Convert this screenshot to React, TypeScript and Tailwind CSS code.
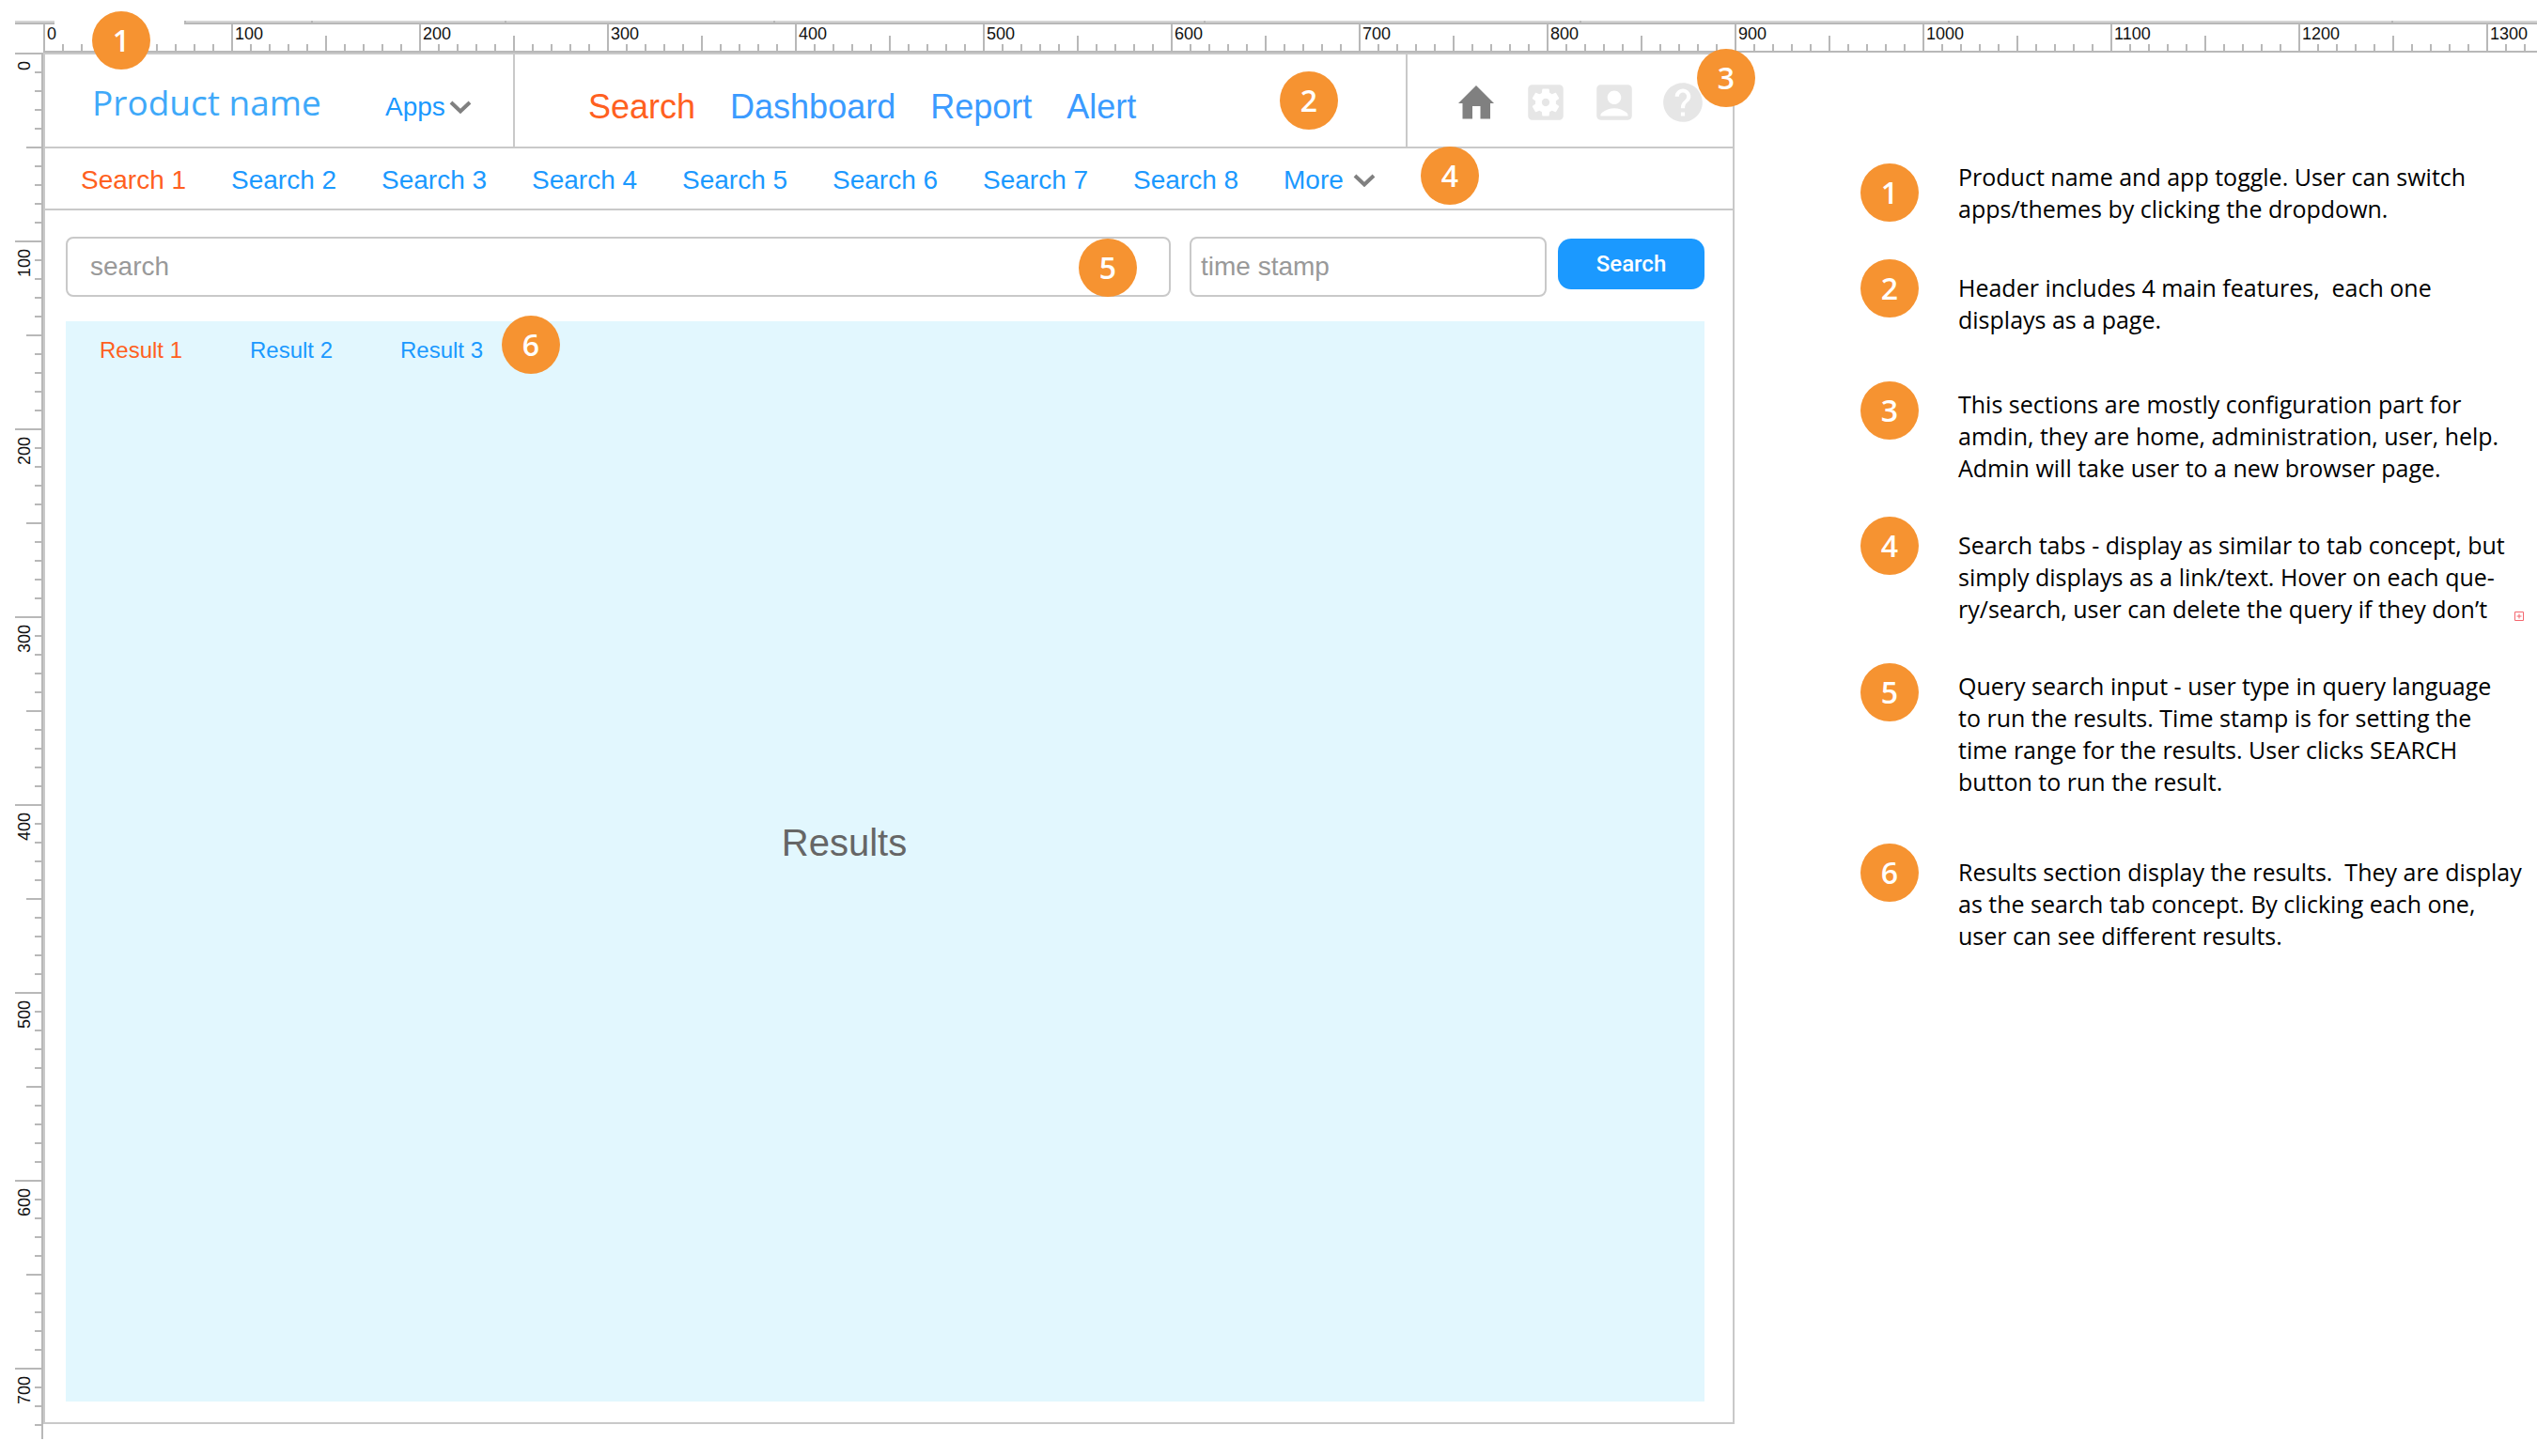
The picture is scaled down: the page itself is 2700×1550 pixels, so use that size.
import React from "react";
import { MdAccountBox, MdHelp, MdSettingsApplications } from "react-icons/md";

const TEN = [0, 1, 2, 3, 4, 5, 6, 7, 8, 9];

function Badge({ n, className = "" }: { n: number; className?: string }) {
  return (
    <span
      className={`flex h-[62px] w-[62px] shrink-0 items-center justify-center rounded-full bg-[#f69331] font-['Open_Sans','Noto_Sans',sans-serif] text-[32px] leading-[62px] font-semibold text-white ${className}`}
    >
      {n}
    </span>
  );
}

function Chevron() {
  return (
    <svg viewBox="0 0 24 14" className="h-[14px] w-6" fill="none" stroke="#808080" strokeWidth="4" aria-hidden="true">
      <path d="M2 2l10 9.500L22 2" />
    </svg>
  );
}

function HomeIcon() {
  return (
    <svg viewBox="0 0 38 36" className="h-9 w-[38px]" fill="#808080" aria-hidden="true">
      <path d="M19 0L38 19H34V35.500H23.500V22H15V35.500H4.500V19H0Z" />
    </svg>
  );
}

function HorizontalRuler() {
  const marks = [0, 100, 200, 300, 400, 500, 600, 700, 800, 900, 1000, 1100, 1200, 1300];
  const edge = "h-1 shrink-0 border-b-2 border-b-[#b8b8b8] bg-[#d4d4d4]";
  const notch = `${edge} border-l-2 border-l-[#b8b8b8]`;
  return (
    <div className="h-14 overflow-hidden pt-[22px]">
      <div className="flex pl-4">
        <div className={`${edge} mr-[138px] w-[42px]`} />
        <div className={`${notch} w-[135px]`} />
        <div className={`${notch} w-[206px]`} />
        <div className={`${notch} w-[286px]`} />
        <div className={`${notch} w-[458px]`} />
        <div className={`${notch} w-[400px]`} />
        <div className={`${notch} w-[392px]`} />
        <div className={`${notch} w-[472px]`} />
        <div className={`${notch} grow`} />
      </div>
      <div className="ml-[46px] flex h-[30px] overflow-hidden border-b-2 border-[#b8b8b8]">
        {marks.map((m) => (
          <div key={m} className="relative flex w-[200px] shrink-0 items-end">
            {TEN.map((t) => (
              <div
                key={t}
                className={`w-5 border-l-2 border-[#b8b8b8] ${t === 0 ? "h-full" : t === 5 ? "h-4" : "h-[7px]"}`}
              />
            ))}
            <span className="absolute top-0 left-1 text-[18px] leading-[20px] text-[#111]">{m}</span>
          </div>
        ))}
      </div>
    </div>
  );
}

function VerticalRuler() {
  const marks = [0, 100, 200, 300, 400, 500, 600, 700];
  return (
    <div className="w-[46px] shrink-0 border-r-2 border-[#b8b8b8]">
      {marks.map((m) => (
        <div key={m} className={`relative flex flex-col items-end overflow-hidden ${m === 700 ? "h-[76px]" : "h-[200px]"}`}>
          {TEN.map((t) => (
            <div
              key={t}
              className={`h-5 shrink-0 border-t-2 border-[#b8b8b8] ${t === 0 ? "w-7" : t === 5 ? "w-4" : "w-[7px]"}`}
            />
          ))}
          <span className="absolute top-[9px] left-4 rotate-180 text-[18px] leading-[20px] text-[#111] [writing-mode:vertical-rl]">
            {m}
          </span>
        </div>
      ))}
    </div>
  );
}

function Header() {
  return (
    <header className="flex h-[100px] border-b-2 border-[#c9c9c9]">
      <div className="relative flex w-[500px] shrink-0 items-center border-r-2 border-[#c9c9c9] pl-[50px]">
        <h1 className="w-[312px] pt-1 font-['Open_Sans','Noto_Sans',sans-serif] text-[37px] leading-[48px] text-[#3fa9f9]">
          Product name
        </h1>
        <button type="button" className="flex items-center gap-1 pt-[14px] text-[28px] leading-[36px] text-[#1b99ff]">
          Apps
          <Chevron />
        </button>
        <Badge n={1} className="absolute -top-[46px] left-[50px]" />
      </div>
      <nav aria-label="Main" className="flex grow items-center gap-[37px] pr-[72px] pl-[78px] text-[36px] leading-[44px] text-[#3b9bff]">
        <a href="#search" className="pt-[14px] text-[#ff6020]">Search</a>
        <a href="#dashboard" className="pt-[14px]">Dashboard</a>
        <a href="#report" className="pt-[14px]">Report</a>
        <a href="#alert" className="pt-[14px]">Alert</a>
        <Badge n={2} className="ml-auto" />
      </nav>
      <div className="relative flex w-[348px] shrink-0 items-center gap-[23px] border-l-2 border-[#c9c9c9] pt-1 pl-[54px] text-[#e6e6e6]">
        <button type="button" aria-label="Home"><HomeIcon /></button>
        <button type="button" aria-label="Administration" className="ml-[7px]"><MdSettingsApplications size={50} /></button>
        <button type="button" aria-label="User"><MdAccountBox size={50} /></button>
        <button type="button" aria-label="Help"><MdHelp size={50} /></button>
        <Badge n={3} className="absolute -top-[6px] -right-[24px]" />
      </div>
    </header>
  );
}

function SearchTabs() {
  return (
    <nav aria-label="Searches" className="relative flex h-[66px] items-center border-b-2 border-[#c9c9c9] pt-1 pl-[38px] text-[28px] leading-[36px] text-[#1b99ff]">
      {[1, 2, 3, 4, 5, 6, 7, 8].map((n) => (
        <a key={n} href={`#search-${n}`} className={`w-40 ${n === 1 ? "text-[#ff6020]" : ""}`}>
          Search {n}
        </a>
      ))}
      <button type="button" className="flex items-center gap-[10px]">
        More
        <Chevron />
      </button>
      <Badge n={4} className="absolute -top-[2px] left-[1464px]" />
    </nav>
  );
}

function SearchForm() {
  const field = "h-16 w-full rounded-lg border-2 border-[#c9c9c9] bg-white text-[28px] text-[#333] placeholder:text-[#999] focus:outline-none";
  return (
    <form className="flex pt-7" onSubmit={(e) => e.preventDefault()}>
      <div className="relative mr-5 grow">
        <input type="text" aria-label="Search query" placeholder="search" className={`${field} pl-6`} />
        <Badge n={5} className="absolute top-[2px] right-[36px]" />
      </div>
      <div className="mr-3 w-[380px] shrink-0">
        <input type="text" aria-label="Time stamp" placeholder="time stamp" className={`${field} pl-[10px]`} />
      </div>
      <button
        type="submit"
        className="mt-[2px] h-[54px] w-[156px] shrink-0 rounded-[14px] bg-[#1b99ff] font-['Roboto',sans-serif] text-[24px] font-medium text-white"
      >
        Search
      </button>
    </form>
  );
}

function Results() {
  return (
    <section aria-label="Results" className="relative mt-[26px] flex h-[1150px] flex-col bg-[#e2f7fe]">
      <nav aria-label="Result tabs" className="flex pt-[15px] pl-9 text-[24px] leading-[32px] text-[#1b99ff]">
        {[1, 2, 3].map((n) => (
          <a key={n} href={`#result-${n}`} className={`w-40 ${n === 1 ? "text-[#ff6020]" : ""}`}>
            Result {n}
          </a>
        ))}
      </nav>
      <p className="flex grow items-center justify-center pr-[87px] pb-[87px] text-[40px] leading-[48px] text-[#666]">Results</p>
      <Badge n={6} className="absolute -top-[6px] left-[464px]" />
    </section>
  );
}

const NOTES = [
  {
    row: "h-[102px]",
    text: "pt-0",
    lines: ["Product name and app toggle. User can switch", "apps/themes by clicking the dropdown."],
  },
  { row: "h-[130px]", text: "pt-4", lines: ["Header includes 4 main features,  each one", "displays as a page."] },
  {
    row: "h-[144px]",
    text: "pt-[10px]",
    lines: [
      "This sections are mostly configuration part for",
      "amdin, they are home, administration, user, help.",
      "Admin will take user to a new browser page.",
    ],
  },
  {
    row: "h-[156px]",
    text: "pt-4",
    overflow: true,
    lines: [
      "Search tabs - display as similar to tab concept, but",
      "simply displays as a link/text. Hover on each que-",
      "ry/search, user can delete the query if they don’t",
    ],
  },
  {
    row: "h-[192px]",
    text: "pt-[10px]",
    lines: [
      "Query search input - user type in query language",
      "to run the results. Time stamp is for setting the",
      "time range for the results. User clicks SEARCH",
      "button to run the result.",
    ],
  },
  {
    row: "h-[144px]",
    text: "pt-4",
    lines: [
      "Results section display the results.  They are display",
      "as the search tab concept. By clicking each one,",
      "user can see different results.",
    ],
  },
];

function OverflowMark() {
  return (
    <svg viewBox="0 0 10 10" className="absolute right-[14px] bottom-[42px] h-[10px] w-[10px]" fill="none" stroke="#f4666e" aria-hidden="true">
      <path d="M.5.5h9v9h-9zM5 2.500v5M2.500 5h5" />
    </svg>
  );
}

function Notes() {
  return (
    <aside className="w-[854px] shrink-0 pt-[115px] pl-[134px] font-['Open_Sans','Noto_Sans',sans-serif] text-[25px] leading-[34px] text-black">
      <ol>
        {NOTES.map((note, i) => (
          <li key={i} className={`relative flex items-start gap-[42px] ${note.row}`}>
            <Badge n={i + 1} className="mt-[3px]" />
            <p className={`whitespace-pre ${note.text}`}>{note.lines.join("\n")}</p>
            {note.overflow && <OverflowMark />}
          </li>
        ))}
      </ol>
    </aside>
  );
}

export default function App() {
  return (
    <div className="min-h-screen overflow-hidden bg-white font-['Liberation_Sans',Arial,sans-serif]">
      <HorizontalRuler />
      <div className="flex items-start">
        <VerticalRuler />
        <main className="min-w-0 grow border-2 border-[#c9c9c9]">
          <Header />
          <SearchTabs />
          <div className="pr-[30px] pb-[22px] pl-[22px]">
            <SearchForm />
            <Results />
          </div>
        </main>
        <Notes />
      </div>
    </div>
  );
}
